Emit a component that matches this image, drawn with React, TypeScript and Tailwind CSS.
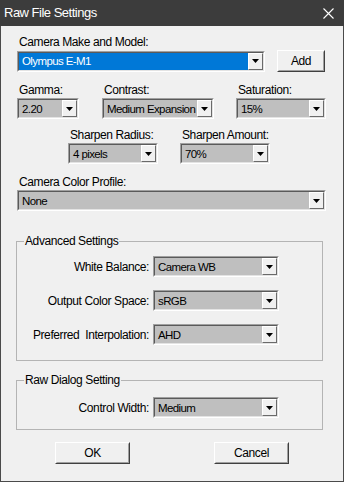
import React from 'react';

// 经典 Windows 风格的下拉框
const Dropdown = ({ w, value, selected = false }: { w: string; value: string; selected?: boolean }) => (
  <div className={`${w} h-[21px] border border-t-[#a0a0a0] border-l-[#a0a0a0] border-r-white border-b-white`}>
    <div className="flex h-full border border-t-[#5a5a5a] border-l-[#5a5a5a] border-r-[#e3e3e3] border-b-[#e3e3e3]">
      <div
        className={`flex-1 min-w-0 flex items-center pl-[3px] whitespace-nowrap overflow-hidden text-[11.5px] tracking-[-0.6px] ${
          selected ? 'bg-[#0078d7] text-white' : 'bg-[#bfbfbf] text-black'
        }`}
      >
        {value}
      </div>
      <div className={`w-[15px] flex ${selected ? 'bg-[#0078d7]' : 'bg-[#bfbfbf]'}`}>
        <div className="flex-1 flex items-center justify-center bg-[#f0f0f0] border border-t-white border-l-white border-r-[#6a6a6a] border-b-[#6a6a6a]">
          <svg width="7" height="4" viewBox="0 0 7 4">
            <path d="M0 0H7L3.5 4Z" fill="#000" />
          </svg>
        </div>
      </div>
    </div>
  </div>
);

const Btn = ({ w, label }: { w: string; label: string }) => (
  <div className={`${w} h-[22px] border border-t-white border-l-white border-r-[#404040] border-b-[#404040] bg-[#f0f0f0]`}>
    <div className="h-full flex items-center justify-center border border-t-[#f0f0f0] border-l-[#f0f0f0] border-r-[#a0a0a0] border-b-[#a0a0a0]">
      {label}
    </div>
  </div>
);

const Label = ({ children, className = '' }: { children: React.ReactNode; className?: string }) => (
  <div className={`h-[14px] leading-[14px] pl-[2px] mb-px ${className}`}>{children}</div>
);

const Row = ({ label, value }: { label: string; value: string }) => (
  <div className="flex items-center">
    <div className="w-[136px] text-right pr-[4px] whitespace-pre">{label}</div>
    <Dropdown w="w-[126px]" value={value} />
  </div>
);

export default function App() {
  return (
    <div
      className="w-[344px] h-[482px] bg-[#f0f0f0] border-x border-b border-[#4a4a4a] flex flex-col text-[12px] leading-[14px] tracking-[-0.4px] text-black"
      style={{ fontFamily: '"Liberation Sans", Arial, sans-serif' }}
    >
      {/* title bar */}
      <div className="h-[26px] -mx-px bg-[#3c3c3c] flex items-center justify-between pl-[4px] pr-[10px] text-white text-[13px] tracking-[-0.5px]">
        <span>Raw File Settings</span>
        <svg width="11" height="11" viewBox="0 0 11 11">
          <path d="M0.5 0.5L10.5 10.5M10.5 0.5L0.5 10.5" stroke="#fff" strokeWidth="1.1" />
        </svg>
      </div>

      <div className="flex flex-col px-[16px]">
        <div className="mt-[9px]">
          <Label>Camera Make and Model:</Label>
          <div className="flex items-center gap-[12px]">
            <Dropdown w="w-[248px]" value="Olympus E-M1" selected />
            <Btn w="w-[48px]" label="Add" />
          </div>
        </div>

        <div className="mt-[11px] flex">
          <div>
            <Label>Gamma:</Label>
            <Dropdown w="w-[62px]" value="2.20" />
          </div>
          <div className="ml-[23px]">
            <Label>Contrast:</Label>
            <Dropdown w="w-[112px]" value="Medium Expansion" />
          </div>
          <div className="ml-[22px]">
            <Label>Saturation:</Label>
            <Dropdown w="w-[90px]" value="15%" />
          </div>
        </div>

        <div className="mt-[9px] flex pl-[51px]">
          <div>
            <Label>Sharpen Radius:</Label>
            <Dropdown w="w-[90px]" value="4 pixels" />
          </div>
          <div className="ml-[22px]">
            <Label>Sharpen Amount:</Label>
            <Dropdown w="w-[90px]" value="70%" />
          </div>
        </div>

        <div className="mt-[11px]">
          <Label>Camera Color Profile:</Label>
          <Dropdown w="w-[309px]" value="None" />
        </div>

        <fieldset className="mt-[23px] -ml-px w-[307px] border border-[#b4b4b4] pb-[15px]">
          <legend className="ml-[7px] px-[1px] h-[14px] leading-[14px]">Advanced Settings</legend>
          <div className="flex flex-col gap-[13px] mt-[8px]">
            <Row label="White Balance:" value="Camera WB" />
            <Row label="Output Color Space:" value="sRGB" />
            <Row label="Preferred  Interpolation:" value="AHD" />
          </div>
        </fieldset>

        <fieldset className="mt-[12px] -ml-px w-[307px] border border-[#b4b4b4] pb-[11px]">
          <legend className="ml-[7px] px-[1px] h-[14px] leading-[14px]">Raw Dialog Setting</legend>
          <div className="mt-[10px]">
            <Row label="Control Width:" value="Medium" />
          </div>
        </fieldset>

        <div className="mt-[12px] flex pl-[38px] gap-[84px]">
          <Btn w="w-[75px]" label="OK" />
          <Btn w="w-[75px]" label="Cancel" />
        </div>
      </div>
    </div>
  );
}
